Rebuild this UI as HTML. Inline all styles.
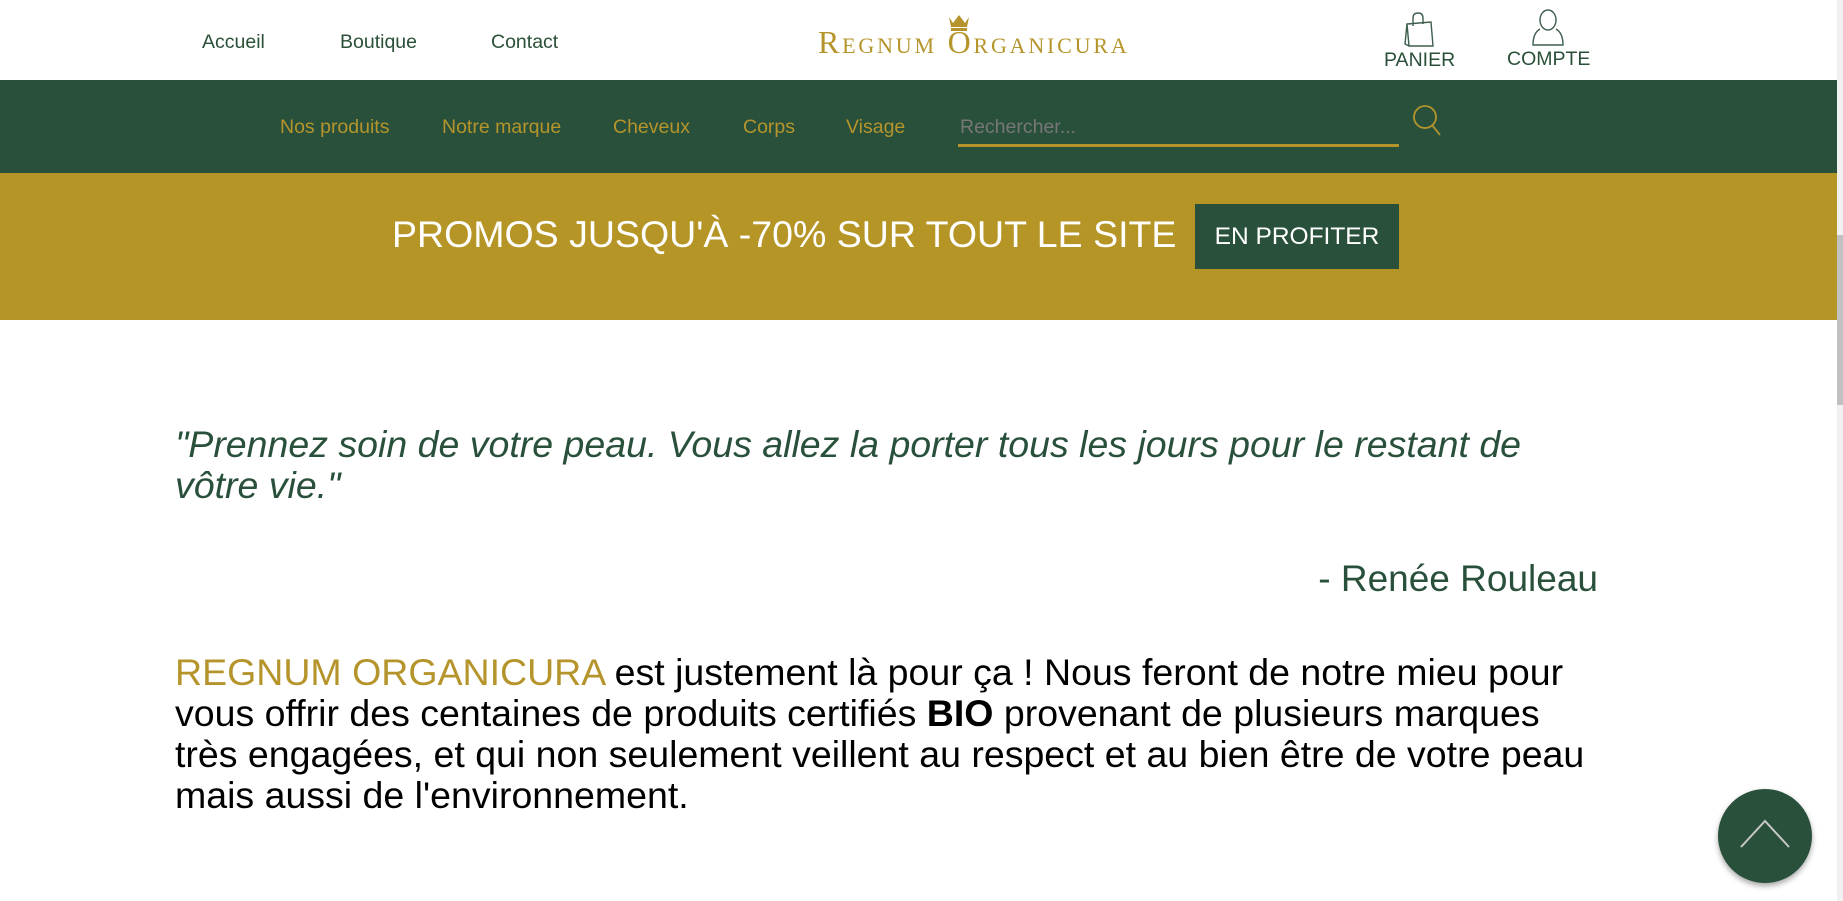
<!DOCTYPE html>
<html><head><meta charset="utf-8"><style>
*{margin:0;padding:0;box-sizing:border-box}
body{width:1843px;height:901px;overflow:hidden;background:#fff;font-family:"Liberation Sans",Arial,sans-serif;position:relative}
.a{position:absolute;white-space:nowrap}
.top a{color:#2a5038;font-size:19.5px}
.nav{position:absolute;left:0;top:80px;width:1837px;height:93px;background:#29503b}
.nav span{position:absolute;top:36px;color:#b5952b;font-size:19.5px}
.promo{position:absolute;left:0;top:173px;width:1837px;height:147px;background:#b59525}
.sb{position:absolute;left:1837px;top:0;width:6px;height:901px;background:#f1f1f1}
</style></head><body>
<div class="a top" style="left:202px;top:31px"><a>Accueil</a></div>
<div class="a top" style="left:340px;top:31px"><a>Boutique</a></div>
<div class="a top" style="left:491px;top:31px"><a>Contact</a></div>
<svg class="a" style="left:947px;top:13px" width="24" height="18" viewBox="0 0 24 18"><path d="M2 4 L6 10 L12 2 L18 10 L22 4 L20 14 L4 14Z" fill="#b5952b"/><rect x="4" y="15" width="16" height="3" fill="#b5952b"/></svg>
<div class="a" style="left:818px;top:24px;font-family:'Liberation Serif',serif;color:#b5952b;font-size:32px;font-variant:small-caps;letter-spacing:2.8px">Regnum Organicura</div>
<svg class="a" style="left:1403px;top:10px" width="36" height="38" viewBox="0 0 36 38" fill="none" stroke="#3d5e4c" stroke-width="1.4"><path d="M4 14 L28 12 L30 36 L6 36Z M4 14 L2 34 L6 36"/><path d="M10 16 V8 Q10 3 15 3 Q20 3 20 8 V14"/></svg>
<svg class="a" style="left:1530px;top:9px" width="36" height="38" viewBox="0 0 36 38" fill="none" stroke="#3d5e4c" stroke-width="1.4"><ellipse cx="18" cy="11" rx="8" ry="10"/><path d="M10 20 Q3 24 3 36 H33 Q33 24 26 20"/></svg>
<div class="a" style="left:1384px;top:49px;color:#2a5038;font-size:19.5px">PANIER</div>
<div class="a" style="left:1507px;top:48px;color:#2a5038;font-size:19.5px">COMPTE</div>
<div class="nav">
<span style="left:280px">Nos produits</span><span style="left:442px">Notre marque</span><span style="left:613px">Cheveux</span><span style="left:743px">Corps</span><span style="left:846px">Visage</span>
<span style="left:960px;color:#777">Rechercher...</span>
<div style="position:absolute;left:958px;top:64px;width:441px;height:3px;background:#b5952b"></div>
<svg style="position:absolute;left:1411px;top:24px" width="34" height="34" viewBox="0 0 34 34" fill="none" stroke="#b5952b" stroke-width="1.8"><circle cx="14" cy="13" r="11"/><path d="M21 21 L29 31"/></svg>
</div>
<div class="promo">
<div class="a" style="left:392px;top:40px;color:#fff;font-size:37.5px">PROMOS JUSQU'À -70% SUR TOUT LE SITE</div>
<div class="a" style="left:1195px;top:31px;width:204px;height:65px;background:#29503b;color:#fff;font-size:24.5px;text-align:center;line-height:65px">EN PROFITER</div>
</div>
<div class="a" style="left:175px;top:424px;width:1400px;white-space:normal;color:#29503b;font-size:37.5px;font-style:italic;line-height:41px">"Prennez soin de votre peau. Vous allez la porter tous les jours pour le restant de vôtre vie."</div>
<div class="a" style="right:245px;top:558px;color:#29503b;font-size:37px">- Renée Rouleau</div>
<div class="a" style="left:175px;top:652px;width:1418px;white-space:normal;color:#000;font-size:37.5px;line-height:41px"><span style="color:#b5952b">REGNUM ORGANICURA</span> est justement là pour ça ! Nous feront de notre mieu pour vous offrir des centaines de produits certifiés <b>BIO</b> provenant de plusieurs marques très engagées, et qui non seulement veillent au respect et au bien être de votre peau mais aussi de l'environnement.</div>
<div class="sb"><div style="position:absolute;left:0;top:235px;width:6px;height:170px;background:#c1c1c1"></div></div>
<div class="a" style="left:1718px;top:789px;width:94px;height:94px;border-radius:50%;background:#29503b;box-shadow:0 3px 6px rgba(0,0,0,.35)"><svg width="94" height="94" viewBox="0 0 94 94"><path d="M23 58 L47 32 L71 58" fill="none" stroke="#c8c8c8" stroke-width="2"/></svg></div>
</body></html>
